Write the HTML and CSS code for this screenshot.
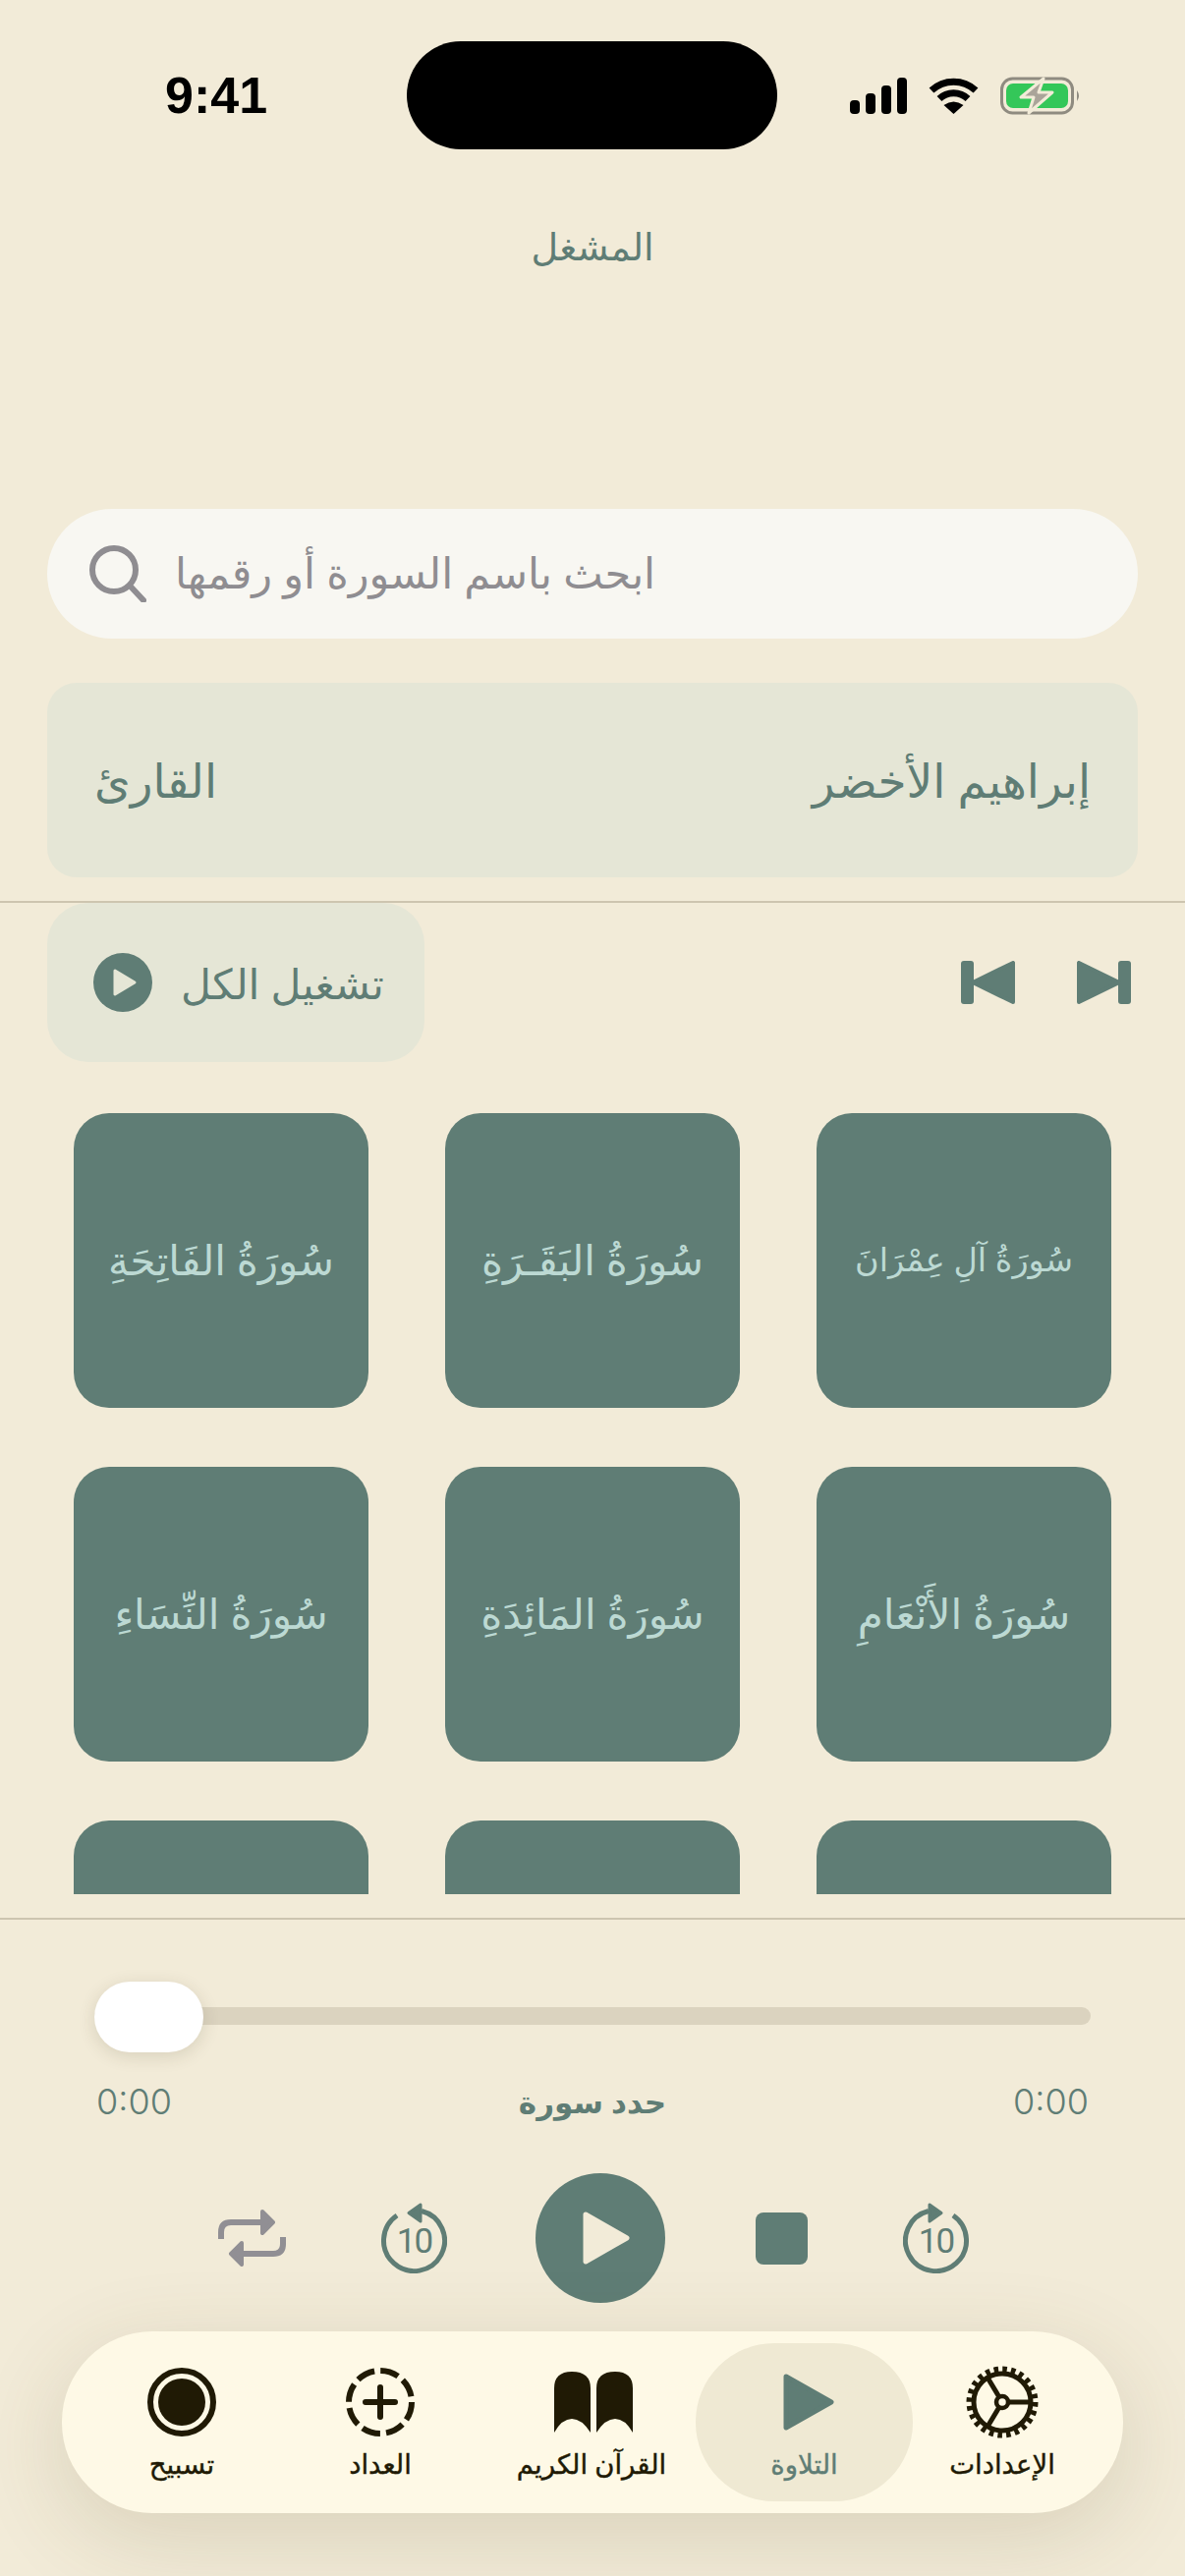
FILE: index.html
```html
<!DOCTYPE html>
<html lang="ar">
<head>
    <meta charset="UTF-8">
    <meta name="viewport" content="width=device-width, initial-scale=1.0">
    <title>المشغل</title>
    <link rel="stylesheet" href="styles.css">
</head>
<body>
<div class="screen">
    <div class="status">
        <div class="clock">9:41</div>
        <div class="island"></div>
        <div class="status-icons">
            <svg width="58" height="37" viewBox="0 0 58 37"><rect x="0" y="23" width="10" height="14" rx="4"/><rect x="16" y="16" width="10" height="21" rx="4"/><rect x="32" y="8" width="10" height="29" rx="4"/><rect x="48" y="0" width="10" height="37" rx="4"/></svg>
            <svg width="51" height="37" viewBox="0 0 51 37"><path d="M3 13A33 33 0 0 1 48 13M11 21.500A21 21 0 0 1 40 21.500" fill="none" stroke="#000" stroke-width="7"/><path d="M25.500 37L15.500 28Q25.500 21 35.500 28Z"/></svg>
            <svg width="82" height="39" viewBox="0 0 82 39"><rect x="1.500" y="2" width="72" height="35" rx="11" fill="none" stroke="#8f8b80" stroke-width="3"/><rect x="6" y="7" width="63" height="25" rx="7" fill="#34c759"/><path d="M78 14Q82 19.500 78 25Z" fill="#8f8b80"/><path d="M44 2L21 21H34L29 37L53 16H39Z" fill="#aaa499" stroke="#f2ebd8" stroke-width="3" stroke-linejoin="round"/></svg>
        </div>
    </div>

    <h1 class="title">المشغل</h1>

    <div class="search">
        <svg width="58" height="58" viewBox="0 0 58 58" fill="none" stroke="#8f8d91" stroke-width="6"><circle cx="25" cy="25" r="22"/><path d="M41 41L55 56" stroke-linecap="round"/></svg>
        <span class="search-text">ابحث باسم السورة أو رقمها</span>
    </div>

    <div class="reader">
        <span>القارئ</span>
        <span>إبراهيم الأخضر</span>
    </div>

    <div class="divider"></div>

    <div class="play-row">
        <div class="play-all">
            <svg width="60" height="60" viewBox="0 0 60 60"><circle cx="30" cy="30" r="30" fill="#5f7d75"/><path d="M22 18L42 30L22 42Z" fill="#e5e6d6" stroke="#e5e6d6" stroke-width="3" stroke-linejoin="round"/></svg>
            <span>تشغيل الكل</span>
        </div>
        <div class="skip">
            <svg width="55" height="44" viewBox="0 0 55 44" fill="#5f7d75"><rect x="0" y="0" width="13" height="44" rx="3"/><path d="M53 2V42L12 22Z" stroke="#5f7d75" stroke-width="4" stroke-linejoin="round"/></svg>
            <svg width="55" height="44" viewBox="0 0 55 44" fill="#5f7d75"><rect x="42" y="0" width="13" height="44" rx="3"/><path d="M2 2V42L43 22Z" stroke="#5f7d75" stroke-width="4" stroke-linejoin="round"/></svg>
        </div>
    </div>

    <div class="grid-wrap">
        <div class="grid">
            <div class="surah">سُورَةُ الفَاتِحَةِ</div>
            <div class="surah">سُورَةُ البَقَـرَةِ</div>
            <div class="surah surah-long">سُورَةُ آلِ عِمْرَانَ</div>
            <div class="surah">سُورَةُ النِّسَاءِ</div>
            <div class="surah">سُورَةُ المَائِدَةِ</div>
            <div class="surah">سُورَةُ الأَنْعَامِ</div>
            <div class="surah"></div>
            <div class="surah"></div>
            <div class="surah"></div>
        </div>
    </div>

    <div class="divider"></div>

    <div class="player">
        <div class="slider">
            <div class="track"></div>
            <div class="thumb"></div>
        </div>
        <div class="times">
            <span class="time">0:00</span>
            <span class="mode">حدد سورة</span>
            <span class="time">0:00</span>
        </div>
        <div class="controls">
            <svg class="ctl-repeat" width="69" height="58" viewBox="0 0 69 58" fill="none" stroke="#918f94" stroke-width="6"><path d="M3 30V23Q3 13 13 13H46M66 28V35Q66 45 56 45H23"/><path d="M45 2L56 13L45 24ZM24 34L13 45L24 56Z" fill="#918f94" stroke-width="4" stroke-linejoin="round"/></svg>
            <svg width="67" height="72" viewBox="0 0 67 72" fill="none" stroke="#5f7d75" stroke-width="5">
                <path d="M41 8.500A31 31 0 1 1 16 13"/>
                <path d="M40 2V19L28 10.500Z" fill="#5f7d75" stroke-width="3" stroke-linejoin="round"/>
                <text class="ten" x="33.500" y="51" text-anchor="middle">10</text>
            </svg>
            <div class="play-btn">
                <svg width="48" height="54" viewBox="0 0 48 54"><path d="M3 3L45 27L3 51Z" fill="#f2ebd8" stroke="#f2ebd8" stroke-width="5" stroke-linejoin="round"/></svg>
            </div>
            <div class="stop"></div>
            <svg width="67" height="72" viewBox="0 0 67 72" fill="none" stroke="#5f7d75" stroke-width="5">
                <path d="M26 8.500A31 31 0 1 0 51 13"/>
                <path d="M27 2V19L39 10.500Z" fill="#5f7d75" stroke-width="3" stroke-linejoin="round"/>
                <text class="ten" x="33.500" y="51" text-anchor="middle">10</text>
            </svg>
        </div>
    </div>

    <nav class="nav">
        <div class="nav-item">
            <div class="nav-icon">
                <svg width="70" height="70" viewBox="0 0 70 70"><circle cx="35" cy="35" r="32" fill="none" stroke="#201a05" stroke-width="6"/><circle cx="35" cy="35" r="24" fill="#201a05"/></svg>
            </div>
            <span>تسبيح</span>
        </div>
        <div class="nav-item">
            <div class="nav-icon">
                <svg width="70" height="70" viewBox="0 0 70 70" fill="none" stroke="#201a05"><circle cx="35" cy="35" r="32" stroke-width="6" stroke-dasharray="19 6.130"/><path d="M35 20V50M20 35H50" stroke-width="6" stroke-linecap="round"/></svg>
            </div>
            <span>العداد</span>
        </div>
        <div class="nav-item">
            <div class="nav-icon nav-book">
                <svg width="80" height="62" viewBox="0 0 80 62" fill="#201a05"><path d="M0 62V17Q0 0 18 0Q37 0 37 17V62Q28 48 18 48Q8 48 0 62Z"/><path d="M43 62V17Q43 0 62 0Q80 0 80 17V62Q72 48 62 48Q52 48 43 62Z"/></svg>
            </div>
            <span>القرآن الكريم</span>
        </div>
        <div class="nav-item active">
            <div class="nav-icon nav-play">
                <svg width="52" height="58" viewBox="0 0 52 58"><path d="M3 3L49 29L3 55Z" fill="#5f7d75" stroke="#5f7d75" stroke-width="5" stroke-linejoin="round"/></svg>
            </div>
            <span>التلاوة</span>
        </div>
        <div class="nav-item">
            <div class="nav-icon">
                <svg width="76" height="74" viewBox="0 0 76 74" fill="none" stroke="#201a05"><circle cx="38" cy="37" r="33" stroke-width="7" stroke-dasharray="4.500 4.140"/><circle cx="38" cy="37" r="29" stroke-width="5"/><path d="M44 37H66M35 32L23 12M35 42L23 62" stroke-width="5"/><circle cx="38" cy="37" r="6" stroke-width="4.500"/></svg>
            </div>
            <span>الإعدادات</span>
        </div>
    </nav>
</div>
</body>
</html>
```

FILE: styles.css
```css
* {
    box-sizing: border-box;
}
body {
    margin: 0;
    background-color: #f2ebd8;
    font-family: "Noto Sans", "DejaVu Sans", sans-serif;
    color: #5f7d75;
}
.screen {
    width: 1206px;
    height: 2622px;
    overflow: hidden;
    display: flex;
    flex-direction: column;
}
.status {
    height: 152px;
    padding: 42px 0 0 168px;
    display: flex;
}
.clock {
    width: 100px;
    height: 110px;
    margin-right: 146px;
    line-height: 110px;
    font-family: "Liberation Sans", sans-serif;
    font-weight: 700;
    font-size: 52px;
    color: #000;
}
.island {
    width: 377px;
    height: 110px;
    margin-right: 74px;
    border-radius: 55px;
    background-color: #000;
}
.status-icons {
    height: 110px;
    display: flex;
    align-items: center;
    gap: 22px;
}
.title {
    margin: 0 0 170px;
    height: 196px;
    line-height: 196px;
    text-align: center;
    font-size: 38px;
    font-weight: 400;
}
.search {
    height: 132px;
    margin: 0 48px 45px;
    padding: 0 43px 4px;
    border-radius: 66px;
    background-color: #f8f7f2;
    display: flex;
    align-items: center;
    gap: 29px;
    color: #8f8d91;
    font-size: 43px;
}
.search svg {
    margin-top: 4px;
}
.reader {
    height: 198px;
    margin: 0 48px 24px;
    padding: 0 48px;
    border-radius: 30px;
    background-color: #e5e6d6;
    display: flex;
    align-items: center;
    justify-content: space-between;
    font-size: 47px;
}
.divider {
    height: 2px;
    flex: none;
    background-color: #cdc5b0;
}
.play-row {
    height: 162px;
    padding: 0 55px 0 48px;
    display: flex;
    align-items: center;
    justify-content: space-between;
}
.play-all {
    width: 384px;
    height: 162px;
    padding: 0 40px 0 47px;
    border-radius: 42px;
    background-color: #e5e6d6;
    display: flex;
    align-items: center;
    gap: 29px;
    font-size: 42.5px;
}
.skip {
    display: flex;
    gap: 63px;
}
.grid-wrap {
    height: 847px;
    margin-bottom: 24px;
    padding: 52px 0 0 75px;
    overflow: hidden;
    flex: none;
}
.grid {
    display: grid;
    grid-template-columns: repeat(3, 300px);
    grid-auto-rows: 300px;
    column-gap: 78px;
    row-gap: 60px;
}
.surah {
    border-radius: 36px;
    background-color: #5f7d75;
    color: #bcd9d3;
    font-size: 42px;
    display: flex;
    align-items: center;
    justify-content: center;
    padding-bottom: 4px;
}
.surah-long {
    font-size: 33.5px;
}
.player {
    padding: 63px 96px 0;
}
.slider {
    position: relative;
    height: 72px;
    display: flex;
    align-items: center;
}
.track {
    width: 100%;
    height: 18px;
    margin-top: -3px;
    border-radius: 9px;
    background-color: #dbd3bf;
}
.thumb {
    position: absolute;
    left: 0;
    top: 0;
    width: 111px;
    height: 72px;
    border-radius: 36px;
    background-color: #fff;
    box-shadow: 0 4px 18px rgba(60, 50, 20, 0.14);
}
.times {
    height: 40px;
    margin-top: 30px;
    padding: 0 2px;
    display: flex;
    align-items: center;
    justify-content: space-between;
}
.time {
    font-family: Inter, sans-serif;
    font-weight: 300;
    font-size: 36px;
}
.mode {
    font-size: 31px;
    font-weight: 600;
}
.controls {
    margin: 53px -96px 0;
    height: 132px;
    padding-left: 1px;
    display: flex;
    align-items: center;
    justify-content: center;
    gap: 90px;
}
.ctl-repeat {
    margin-right: 7px;
}
.ten {
    font-family: Roboto, sans-serif;
    font-size: 35px;
    letter-spacing: -2px;
    fill: #5f7d75;
    stroke: none;
}
.play-btn {
    width: 132px;
    height: 132px;
    border-radius: 50%;
    background-color: #5f7d75;
    display: flex;
    align-items: center;
    justify-content: center;
    padding-left: 12px;
}
.stop {
    width: 53px;
    height: 53px;
    margin: 0 7px 0 2px;
    border-radius: 8px;
    background-color: #5f7d75;
}
.nav {
    height: 185px;
    margin: 29px 63px 0;
    padding: 12px 32px 12px 29px;
    border-radius: 92px;
    background-color: #fef9e6;
    box-shadow: 0 24px 90px rgba(90, 75, 30, 0.16);
    display: grid;
    grid-template-columns: 186px 218px 212px 221px 182px;
}
.nav-item {
    border-radius: 80px;
    padding-top: 23px;
    display: flex;
    flex-direction: column;
    align-items: center;
    color: #201a05;
    font-size: 27.5px;
    font-weight: 500;
    -webkit-text-stroke: 0.4px;
}
.nav-item.active {
    background-color: #efe9d3;
    color: #5f7d75;
}
.nav-icon {
    height: 74px;
    display: flex;
    align-items: center;
    justify-content: center;
    margin-bottom: 6px;
}
.nav-book {
    margin-left: 3px;
}
.nav-play {
    margin-left: 8px;
}
.nav-item span {
    line-height: 40px;
}
```
